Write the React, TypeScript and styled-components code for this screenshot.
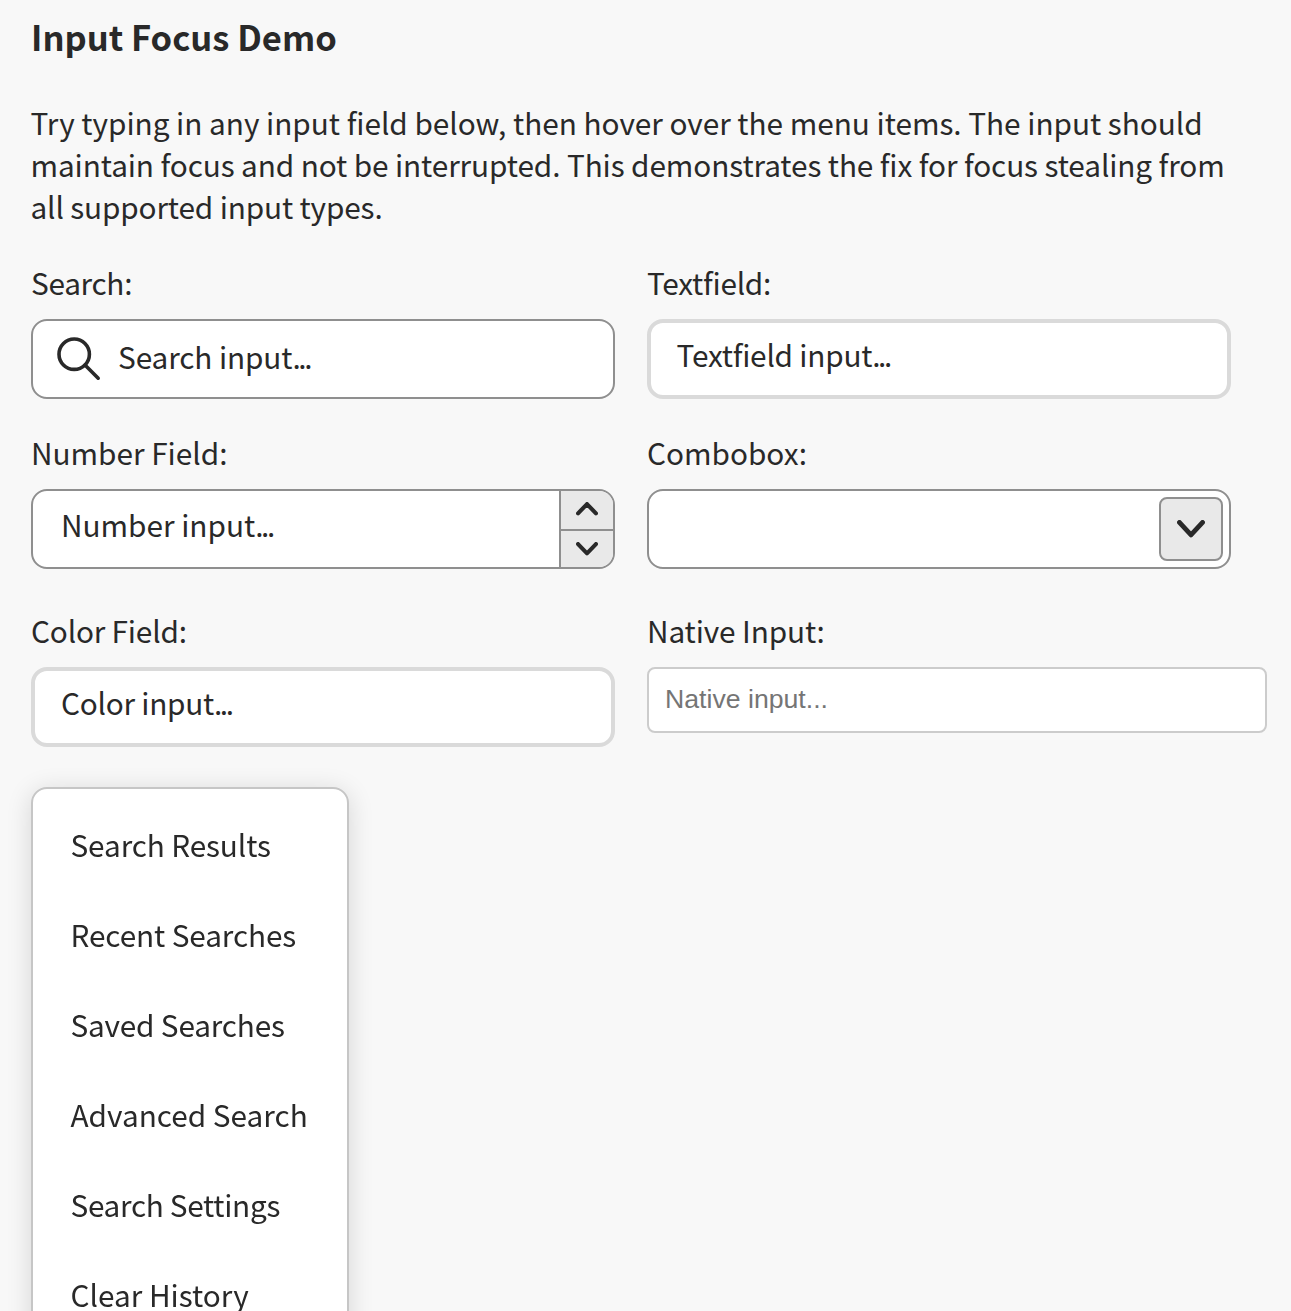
import React from 'react';
import styled, { createGlobalStyle, css } from 'styled-components';

const GlobalStyle = createGlobalStyle`
  *, *::before, *::after { box-sizing: border-box; }
  html { overflow: hidden; }
  body {
    margin: 0;
    height: 1311px;
    overflow: hidden;
    background: #f8f8f8;
    color: #292929;
    font-family: "Noto Sans CJK SC", "Open Sans", sans-serif;
    font-size: 29.75px;
    line-height: 42px;
  }
`;

const Page = styled.main`
  display: flex;
  flex-direction: column;
  align-items: flex-start;
  padding: 11px 24px 0 31px;
`;

const Heading = styled.h3`
  margin: 0 0 40px;
  font-size: 34.5px;
  font-weight: 700;
  line-height: 50px;
`;

const Intro = styled.p`
  margin: 0 0 34px -0.5px;
`;

const IntroLine = styled.span<{ $track: number }>`
  display: block;
  white-space: nowrap;
  letter-spacing: ${({ $track }) => $track}px;
`;

const FieldGrid = styled.div`
  display: grid;
  grid-template-columns: 584px 584px;
  grid-template-rows: 138px 146px 138px;
  column-gap: 32px;
  row-gap: 32px;
  margin-bottom: 40px;
`;

const Field = styled.div`
  display: flex;
  flex-direction: column;
  gap: 16px;
`;

const Label = styled.label<{ $track?: number }>`
  display: block;
  height: 42px;
  white-space: nowrap;
  letter-spacing: ${({ $track = 0 }) => $track}px;
`;

const Control = styled.div<{ $quiet?: boolean }>`
  display: flex;
  flex: none;
  width: 584px;
  height: 80px;
  border-radius: 16px;
  background: #fff;
  overflow: hidden;
  ${({ $quiet }) =>
    $quiet
      ? css`border: 4px solid #dadada;`
      : css`border: 2px solid #8f8f8f;`}
`;

const Value = styled.span<{ $left: number; $top: number; $track?: number }>`
  flex: 1;
  height: 42px;
  white-space: nowrap;
  padding-left: ${({ $left }) => $left}px;
  margin-top: ${({ $top }) => $top}px;
  letter-spacing: ${({ $track = 0 }) => $track}px;
`;

const Dots = styled.span`
  letter-spacing: -2.4px;
`;

const SearchIcon = styled.svg`
  width: 44px;
  height: 44px;
  margin: 16px 0 0 24px;
  flex: none;
`;

const Stepper = styled.div`
  display: flex;
  flex-direction: column;
  width: 54px;
  border-left: 2px solid #8f8f8f;
  background: #e9e9e9;
`;

const StepButton = styled.button`
  display: flex;
  align-items: center;
  justify-content: center;
  flex: none;
  height: 38px;
  padding: 0 0 2px;
  border: 0;
  background: transparent;
  & + & {
    padding: 0;
    border-top: 2px solid #8f8f8f;
  }
`;

const PickerButton = styled.button`
  display: flex;
  align-items: center;
  justify-content: center;
  width: 64px;
  height: 64px;
  margin: 6px 6px 0 auto;
  padding: 0;
  border: 2px solid #8f8f8f;
  border-radius: 8px;
  background: #e9e9e9;
`;

const NativeInput = styled.input`
  width: 620px;
  height: 66px;
  padding: 0 16px 2px;
  border: 2px solid #ccc;
  border-radius: 8px;
  background: #fff;
  font: 26.67px "Liberation Sans", Arial, sans-serif;
  outline: none;
  &::placeholder { color: #757575; opacity: 1; }
`;

const Menu = styled.ul`
  width: 318px;
  height: 640px;
  margin: 0;
  padding: 12px 0;
  list-style: none;
  border: 2px solid #c6c6c6;
  border-radius: 16px;
  background: #fff;
  box-shadow: 0 4px 26px rgba(0, 0, 0, 0.14);
  will-change: transform;
`;

const MenuItem = styled.li<{ $track: number }>`
  height: 90px;
  padding: 22px 0 0 37.5px;
  white-space: nowrap;
  letter-spacing: ${({ $track }) => $track}px;
`;

const Chevron = ({ up, large }: { up?: boolean; large?: boolean }) => {
  const w = large ? 28 : 22;
  const h = large ? 17.4 : 13.4;
  const s = large ? 4.8 : 4.1;
  const e = s / 2;
  const points = up
    ? `${e},${h - e} ${w / 2},${e} ${w - e},${h - e}`
    : `${e},${e} ${w / 2},${h - e} ${w - e},${e}`;
  return (
    <svg width={w} height={h} viewBox={`0 0 ${w} ${h}`} fill="none" stroke="#292929" strokeWidth={s} strokeLinecap="round" strokeLinejoin="round">
      <polyline points={points} />
    </svg>
  );
};

const menuItems = [
  { text: 'Search Results', track: -0.12 },
  { text: 'Recent Searches', track: -0.12 },
  { text: 'Saved Searches', track: -0.18 },
  { text: 'Advanced Search', track: 0 },
  { text: 'Search Settings', track: -0.32 },
  { text: 'Clear History', track: 0 },
];

export default function App() {
  return (
    <>
      <GlobalStyle />
      <Page>
        <Heading>Input Focus Demo</Heading>
        <Intro>
          <IntroLine $track={-0.016}>Try typing in any input field below, then hover over the menu items. The input should</IntroLine>
          <IntroLine $track={-0.1}>maintain focus and not be interrupted. This demonstrates the fix for focus stealing from</IntroLine>
          <IntroLine $track={-0.14}>all supported input types.</IntroLine>
        </Intro>
        <FieldGrid>
          <Field>
            <Label $track={-0.3}>Search:</Label>
            <Control>
              <SearchIcon viewBox="0 0 44 44" fill="none" stroke="#292929" strokeWidth="3.6" strokeLinecap="round">
                <circle cx="17.2" cy="17.2" r="15.2" />
                <path d="M28 28L41.2 41.2" />
              </SearchIcon>
              <Value $left={17} $top={14} $track={-0.1}>Search input<Dots>...</Dots></Value>
            </Control>
          </Field>
          <Field>
            <Label $track={-0.25}>Textfield:</Label>
            <Control $quiet>
              <Value $left={25.5} $top={10} $track={-0.22}>Textfield input<Dots>...</Dots></Value>
            </Control>
          </Field>
          <Field>
            <Label>Number Field:</Label>
            <Control>
              <Value $left={28} $top={12}>Number input<Dots>...</Dots></Value>
              <Stepper>
                <StepButton aria-label="Increment"><Chevron up /></StepButton>
                <StepButton aria-label="Decrement"><Chevron /></StepButton>
              </Stepper>
            </Control>
          </Field>
          <Field>
            <Label>Combobox:</Label>
            <Control>
              <PickerButton aria-label="Open"><Chevron large /></PickerButton>
            </Control>
          </Field>
          <Field>
            <Label $track={-0.18}>Color Field:</Label>
            <Control $quiet>
              <Value $left={26} $top={10} $track={-0.25}>Color input<Dots>...</Dots></Value>
            </Control>
          </Field>
          <Field>
            <Label htmlFor="native" $track={-0.1}>Native Input:</Label>
            <NativeInput id="native" placeholder="Native input..." />
          </Field>
        </FieldGrid>
        <Menu role="menu">
          {menuItems.map(({ text, track }) => (
            <MenuItem key={text} role="menuitem" $track={track}>{text}</MenuItem>
          ))}
        </Menu>
      </Page>
    </>
  );
}
